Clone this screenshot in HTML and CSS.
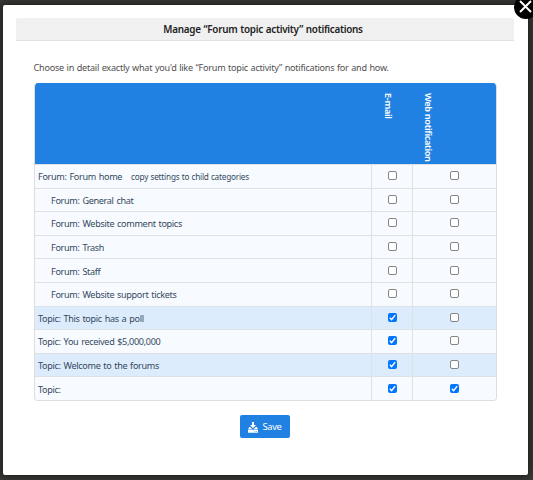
FILE: index.html
```html
<!DOCTYPE html>
<html lang="en">
<head>
<meta charset="utf-8">
<title>Manage notifications</title>
<link rel="stylesheet" href="styles.css">
</head>
<body>
<main class="modal">
  <button class="close" aria-label="Close"><svg viewBox="0 0 24 24"><path d="M6 6l11 11M17 6l-11 11"/></svg></button>
  <h1 class="title"><span>Manage “Forum topic activity” notifications</span></h1>
  <p class="intro">Choose in detail exactly what you'd like “Forum topic activity” notifications for and how.</p>
  <section class="grid">
    <div class="row head"><div></div><div class="vertical"><span>E-mail</span></div><div class="vertical"><span>Web notification</span></div></div>
    <div class="row"><div class="name"><span class="home">Forum: Forum home</span><a class="copy">copy settings to child categories</a></div><div class="cell"><i class="box"></i></div><div class="cell"><i class="box"></i></div></div>
    <div class="row child"><div class="name">Forum: General chat</div><div class="cell"><i class="box"></i></div><div class="cell"><i class="box"></i></div></div>
    <div class="row child"><div class="name">Forum: Website comment topics</div><div class="cell"><i class="box"></i></div><div class="cell"><i class="box"></i></div></div>
    <div class="row child"><div class="name">Forum: Trash</div><div class="cell"><i class="box"></i></div><div class="cell"><i class="box"></i></div></div>
    <div class="row child"><div class="name">Forum: Staff</div><div class="cell"><i class="box"></i></div><div class="cell"><i class="box"></i></div></div>
    <div class="row child"><div class="name">Forum: Website support tickets</div><div class="cell"><i class="box"></i></div><div class="cell"><i class="box"></i></div></div>
    <div class="row active"><div class="name">Topic: This topic has a poll</div><div class="cell"><i class="box on"><svg viewBox="0 0 9 9"><path d="M1.8 4.8l1.8 1.8 3.6-4.5"/></svg></i></div><div class="cell"><i class="box"></i></div></div>
    <div class="row"><div class="name">Topic: You received $5,000,000</div><div class="cell"><i class="box on"><svg viewBox="0 0 9 9"><path d="M1.8 4.8l1.8 1.8 3.6-4.5"/></svg></i></div><div class="cell"><i class="box"></i></div></div>
    <div class="row active"><div class="name">Topic: Welcome to the forums</div><div class="cell"><i class="box on"><svg viewBox="0 0 9 9"><path d="M1.8 4.8l1.8 1.8 3.6-4.5"/></svg></i></div><div class="cell"><i class="box"></i></div></div>
    <div class="row"><div class="name">Topic:</div><div class="cell"><i class="box on"><svg viewBox="0 0 9 9"><path d="M1.8 4.8l1.8 1.8 3.6-4.5"/></svg></i></div><div class="cell"><i class="box on"><svg viewBox="0 0 9 9"><path d="M1.8 4.8l1.8 1.8 3.6-4.5"/></svg></i></div></div>
  </section>
  <button class="save"><svg viewBox="0 0 10 11"><path d="M4 0h2v3h2L5 6.3 2 3h2zM1.2 5h1L5 7.8 7.8 5h1L10 7.4H0zM0 8h10v2.8H0z"/><path class="slot" d="M6.6 9.4h.8M8.3 9.4h.8"/></svg><span>Save</span></button>
</main>
</body>
</html>
```
FILE: styles.css
```css
* { box-sizing: border-box; }
body {
  margin: 0;
  height: 480px;
  overflow: hidden;
  background: #3b3b39;
  font-family: "Noto Sans", sans-serif;
  font-size: 9px;
  color: #35495e;
}
.modal {
  position: relative;
  width: 524.5px;
  height: 470px;
  margin: 4.5px 0 0 3px;
  padding: 13.5px 13px 0;
  border-radius: 2px;
  background: #fff;
  box-shadow: 0 0 8px 2px #1c1c1b;
  display: flex;
  flex-direction: column;
}
.close {
  position: absolute;
  top: -10px;
  right: -10px;
  width: 24px;
  height: 24px;
  padding: 0;
  border: 0;
  border-radius: 50%;
  background: #000;
}
.close svg { display: block; width: 24px; height: 24px; fill: none; stroke: #fff; stroke-width: 2; }
.title {
  margin: 0;
  width: 498px;
  height: 23px;
  padding-right: 4px;
  line-height: 22px;
  border-bottom: 1px solid #e2e2e2;
  border-radius: 2px 2px 0 0;
  background: #f0f0f0;
  color: #222;
  font-size: 9.9px;
  font-weight: 600;
  text-align: center;
  white-space: nowrap;
}
.title span { letter-spacing: -0.28px; word-spacing: .6px; }
.intro {
  margin: 21px 0 9px 17.5px;
  height: 12px;
  line-height: 12px;
  color: #505050;
  font-size: 9.1px;
  white-space: nowrap;
  letter-spacing: -0.24px;
  word-spacing: .5px;
}
.grid {
  width: 463px;
  height: 318px;
  margin-left: 18px;
  border: 1px solid #dedede;
  border-top: 0;
  border-radius: 4px;
  overflow: hidden;
  display: grid;
  grid-template-rows: 81px repeat(10, 1fr);
}
.row {
  display: grid;
  grid-template-columns: 336px 41px 1fr;
  min-height: 0;
  background: #f7fbff;
}
.row + .row { border-top: 1px solid #dfe2e5; }
.row .cell:last-child { padding-right: 1px; }
.active { background: #dcecfd; }
.head { background: #2181e3; margin: 0 -1px; grid-template-columns: 337px 40px 1fr; }
.vertical {
  padding: 10px 0 0 11px;
  color: #fff;
  font-weight: 600;
  font-size: 9.2px;
  line-height: 12px;
  white-space: nowrap;
}
.vertical span { display: block; writing-mode: vertical-rl; letter-spacing: -0.33px; }
.name {
  display: flex;
  align-items: center;
  gap: 9px;
  padding-left: 3px;
  padding-top: 1px;
  font-size: 9.1px;
  letter-spacing: -0.33px;
  word-spacing: .8px;
  white-space: nowrap;
}
.child .name { padding-left: 16px; }
.copy { font-size: 8.2px; letter-spacing: -0.2px; word-spacing: .3px; }
.cell {
  display: flex;
  align-items: center;
  justify-content: center;
  padding-bottom: 1px;
  border-left: 1px solid #dfe2e5;
}
.box { width: 9px; height: 9px; border: 1px solid #858585; border-radius: 2px; background: #fff; }
.on { border: 0; background: #0075ff; }
.on svg { display: block; width: 9px; height: 9px; fill: none; stroke: #fff; stroke-width: 1.4; }
.save {
  width: 50px;
  height: 23px;
  margin: 14px 0 0 224px;
  padding: 0;
  border: 0;
  border-radius: 2px;
  background: #2181e3;
  color: #fff;
  font: 9.3px "Noto Sans", sans-serif;
  letter-spacing: -0.3px;
  display: flex;
  align-items: center;
  justify-content: center;
  gap: 4px;
}
.save svg { width: 10px; height: 11px; margin-top: 1px; fill: #fff; }
.save .slot { stroke: #2181e3; stroke-width: .7; }
```
